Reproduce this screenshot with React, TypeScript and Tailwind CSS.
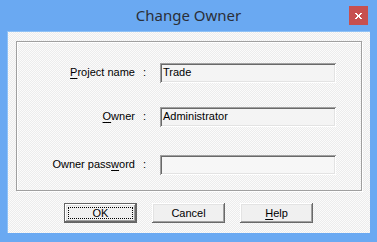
import React from "react";

const raised =
  "shadow-[inset_-1px_-1px_#696969,inset_1px_1px_#ffffff,inset_-2px_-2px_#a0a0a0,inset_2px_2px_#e3e3e3]";
const sunken =
  "shadow-[inset_1px_1px_#a0a0a0,inset_-1px_-1px_#ffffff,inset_2px_2px_#696969,inset_-2px_-2px_#e3e3e3]";
const dither =
  "bg-[repeating-conic-gradient(#ececec_0_25%,#fbfbfb_0_50%)] bg-[length:2px_2px]";

function Field({ value, white }: { value: string; white?: boolean }) {
  return (
    <div
      className={`h-[20px] w-[176px] ${sunken} ${white ? "bg-[#f7f7f7]" : "bg-[#f4f4f4]"} pl-[3px] flex items-center text-black`}
    >
      <span className="leading-none -mt-[1px]">{value}</span>
    </div>
  );
}

function Label({ children }: { children: React.ReactNode }) {
  return (
    <div className="w-[130px] flex justify-end items-center text-black -mt-[2px]">
      <span>{children}</span>
      <span className="ml-[8px] mr-[1px]">:</span>
    </div>
  );
}

function Button({
  children,
  def,
}: {
  children: React.ReactNode;
  def?: boolean;
}) {
  if (def) {
    return (
      <div className="w-[73px] h-[20px] border border-[#646464] bg-[#f0f0f0]">
        <div className={`w-full h-full ${raised} p-[3px]`}>
          <div className="w-full h-full border border-dotted border-black flex items-center justify-center">
            {children}
          </div>
        </div>
      </div>
    );
  }
  return (
    <div
      className={`w-[73px] h-[20px] ${raised} bg-[#f0f0f0] flex items-center justify-center`}
    >
      {children}
    </div>
  );
}

export default function App() {
  return (
    <div
      className="w-[377px] h-[242px] bg-[#6aa9f2] flex flex-col"
      style={{ fontFamily: '"Liberation Sans", Arial, sans-serif' }}
    >
      {/* Title bar */}
      <div className="h-[31px] relative flex items-center justify-center">
        <span
          className="text-[15px] text-[#2b2f38] -mt-[1px]"
          style={{ fontFamily: '"Noto Sans", "Open Sans", sans-serif' }}
        >
          Change Owner
        </span>
        <div className="absolute left-[349px] top-[6px] w-[19px] h-[19px] bg-[#c75050] flex items-center justify-center">
          <svg width="7" height="6" viewBox="0 0 7 6">
            <path
              d="M0 0h2v1h1v1h1V1h1V0h2v1H6v1H5v2h1v1h1v1H5V5H4V4H3v1H2v1H0V5h1V4h1V2H1V1H0z"
              fill="#ffffff"
            />
          </svg>
        </div>
      </div>

      {/* Client area */}
      <div
        className={`mx-[7px] h-[202px] ${dither} border-t border-l border-[#8ec1f6] flex flex-col text-[11px]`}
      >
        {/* Group box */}
        <div className="mt-[9px] mx-[8px] h-[150px] border border-[#a0a0a0] shadow-[1px_1px_#ffffff,inset_1px_1px_#ffffff] flex flex-col">
          <div className="mt-[21px] flex items-center">
            <Label>
              <span className="underline underline-offset-[2px]">P</span>roject
              name
            </Label>
            <div className="ml-[13px]">
              <Field value="Trade" />
            </div>
          </div>
          <div className="mt-[24px] flex items-center">
            <Label>
              <span className="underline underline-offset-[2px]">O</span>wner
            </Label>
            <div className="ml-[13px]">
              <Field value="Administrator" />
            </div>
          </div>
          <div className="mt-[28px] flex items-center">
            <Label>
              Owner pass
              <span className="underline underline-offset-[2px]">w</span>ord
            </Label>
            <div className="ml-[13px]">
              <Field value="" white />
            </div>
          </div>
        </div>

        {/* Buttons */}
        <div className="mt-[12px] pl-[56px] flex gap-[15px] text-black">
          <Button def>OK</Button>
          <Button>Cancel</Button>
          <Button>
            <span>
              <span className="underline underline-offset-[2px]">H</span>elp
            </span>
          </Button>
        </div>
      </div>
    </div>
  );
}
